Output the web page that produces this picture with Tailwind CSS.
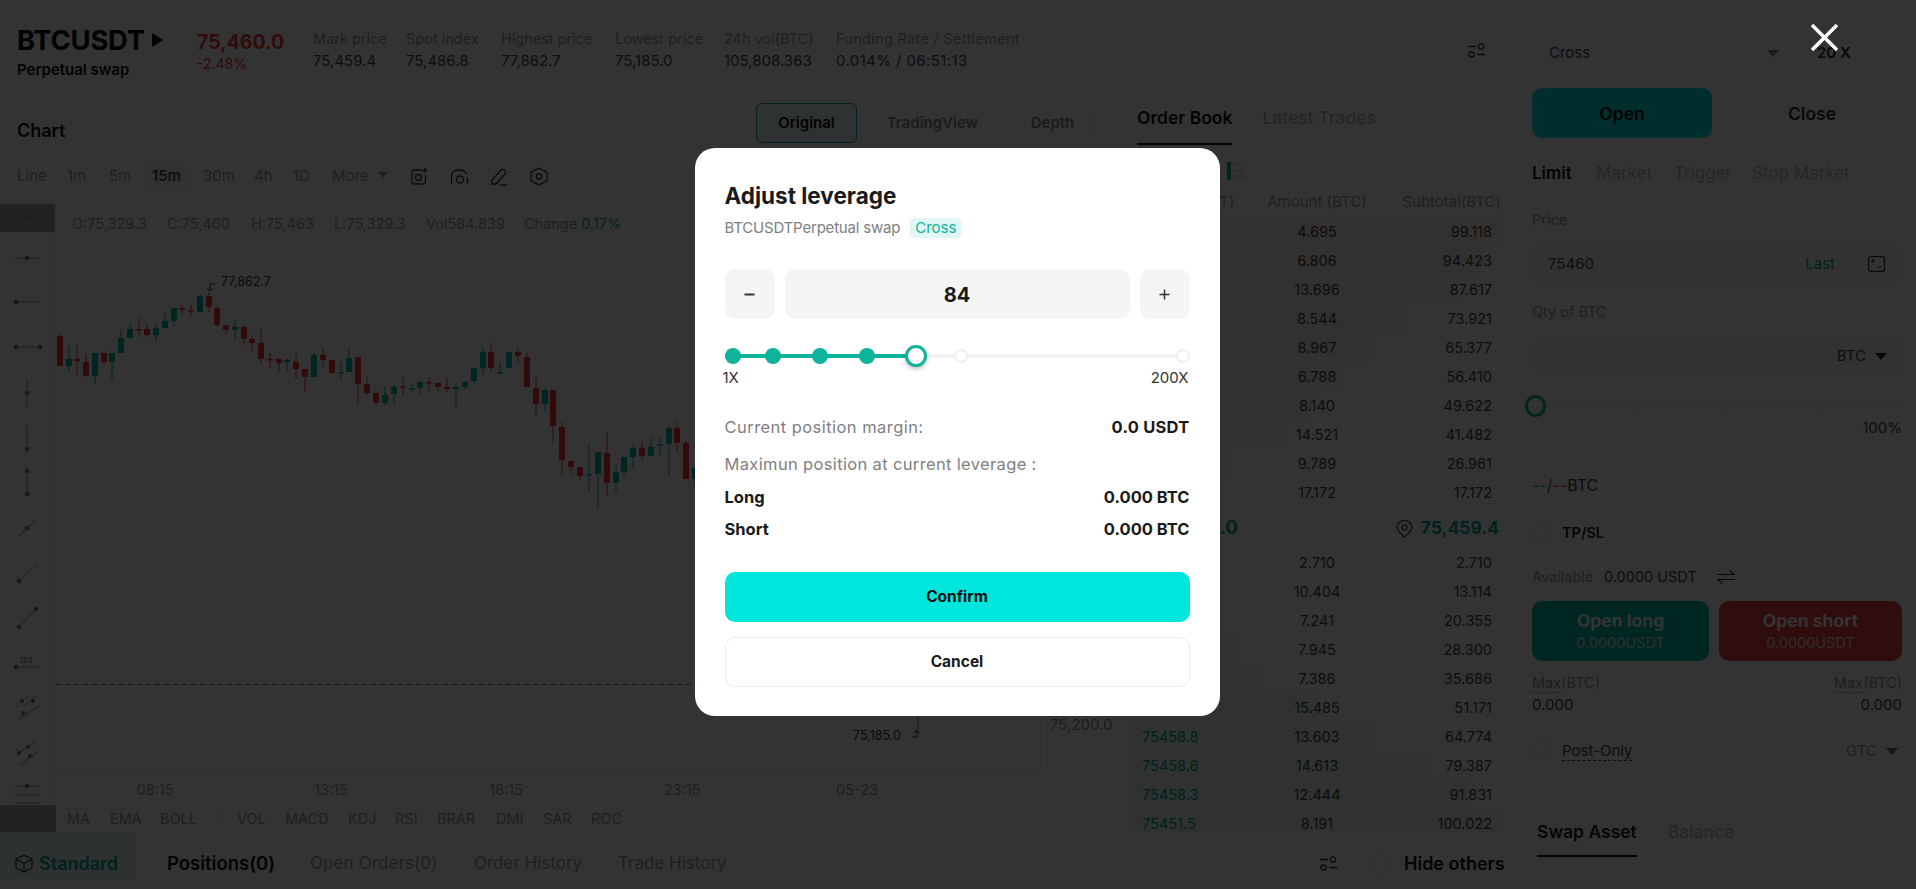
<!DOCTYPE html>
<html lang="en">
<head>
<meta charset="utf-8">
<title>BTCUSDT</title>
<script src="https://cdn.jsdelivr.net/npm/@tailwindcss/browser@4"></script>
</head>
<body class="m-0 bg-white">
<div class="relative w-[1916px] h-[889px] overflow-hidden bg-white font-['Inter','Noto_Sans',sans-serif] text-[14.5px] text-[#444]">
  <div class="flex h-[879px] overflow-hidden">
    <!-- LEFT REGION -->
    <div class="w-[1525px] flex flex-col">
      <!-- header -->
      <div class="h-[92px] shrink-0 flex border-b border-[#f0f0f0]">
        <div class="w-[197px] pl-[17px] pt-[25px]">
          <div class="flex items-center">
            <span class="text-[27.5px] leading-[30px] font-bold text-[#111] tracking-[-0.3px]">BTCUSDT</span>
            <svg class="ml-[7px]" width="11" height="14" viewBox="0 0 11 14"><path d="M0 0 L11 7 L0 14 Z" fill="#111"/></svg>
          </div>
          <div class="text-[15px] leading-[20px] mt-[5px] font-semibold text-[#111]">Perpetual swap</div>
        </div>
        <div class="w-[116px] pt-[29px]">
          <div class="text-[19.5px] leading-[26px] font-bold text-[#ef3a3a]">75,460.0</div>
          <div class="text-[14px] leading-[18px] text-[#ef3a3a]">-2.48%</div>
        </div>
        <div class="w-[93px] pt-[28px] leading-[22px]"><div class="text-[#999]">Mark price</div><div class="text-[15px]">75,459.4</div></div>
        <div class="w-[95px] pt-[28px] leading-[22px]"><div class="text-[#999]">Spot index</div><div class="text-[15px]">75,486.8</div></div>
        <div class="w-[114px] pt-[28px] leading-[22px]"><div class="text-[#999]">Highest price</div><div class="text-[15px]">77,862.7</div></div>
        <div class="w-[109px] pt-[28px] leading-[22px]"><div class="text-[#999]">Lowest price</div><div class="text-[15px]">75,185.0</div></div>
        <div class="w-[112px] pt-[28px] leading-[22px]"><div class="text-[#999]">24h vol(BTC)</div><div class="text-[15px]">105,808.363</div></div>
        <div class="w-[632px] pt-[28px] leading-[22px]"><div class="text-[#999] tracking-[0.3px]">Funding Rate / Settlement</div><div class="text-[15px] tracking-[0.4px]">0.014% / 06:51:13</div></div>
        <div class="pt-[43px]">
          <svg width="17" height="15" viewBox="0 0 17 15" fill="none" stroke="#333" stroke-width="1.3"><path d="M0 3.5H8M9 11.5H17"/><circle cx="13" cy="3.5" r="2.7"/><circle cx="3.5" cy="11.5" r="2.7"/></svg>
        </div>
      </div>
      <!-- middle -->
      <div class="h-[740px] shrink-0 flex overflow-hidden">
        <!-- chart column -->
        <div class="w-[1124px] flex flex-col">
          <div class="h-[61px] shrink-0 flex items-center border-b border-[#f5f5f5] pl-[17px] text-[15px]">
            <span class="text-[18px] font-semibold text-[#111] w-[739px] mt-[16px]">Chart</span>
            <span class="mt-[2px] w-[101px] h-[40px] rounded-[6px] border border-[#00a79d] bg-[#ecfbfa] flex items-center justify-center font-semibold text-[#111]">Original</span>
            <span class="mt-[2px] ml-[10px] w-[131px] h-[40px] rounded-[6px] border border-[#f2f2f2] flex items-center justify-center font-semibold text-[#888]">TradingView</span>
            <span class="mt-[2px] ml-[11px] w-[87px] h-[40px] rounded-[6px] border border-[#f2f2f2] flex items-center justify-center font-semibold text-[#888]">Depth</span>
          </div>
          <div class="h-[51px] shrink-0 flex items-center pl-[17px] pb-[4px] text-[#999] text-[15px]">
            <span class="w-[50px]">Line</span><span class="w-[42px]">1m</span><span class="w-[43px]">5m</span>
            <span class="w-[51px]"><span class="-ml-[5px] inline-block px-[5px] py-[1px] rounded-[3px] bg-[#f4f4f4] text-[#333] font-medium">15m</span></span>
            <span class="w-[51px]">30m</span><span class="w-[39px]">4h</span><span class="w-[39px]">1D</span>
            <span class="w-[79px] flex items-center">More<svg class="ml-[9px] -mt-[4px]" width="10" height="6" viewBox="0 0 10 6"><path d="M0 0H10L5 6Z" fill="#999"/></svg></span>
            <svg class="mr-[22px]" width="17" height="18" viewBox="0 0 17 18" fill="none" stroke="#333" stroke-width="1.3"><path d="M11 2H3.5Q1 2 1 4.5V13.5Q1 16 3.5 16H11Q14.5 16 14.5 13.5V7"/><circle cx="7.5" cy="9.5" r="3"/><path d="M14 0V5M11.5 2.5H16.5"/></svg>
            <svg class="mr-[21px]" width="19" height="18" viewBox="0 0 19 18" fill="none" stroke="#333" stroke-width="1.3"><path d="M1.5 16V9Q1.5 2 9 2Q14 2 17 6"/><circle cx="10" cy="11.5" r="3.5"/><path d="M17.5 10V16"/></svg>
            <svg class="mr-[22px]" width="18" height="18" viewBox="0 0 18 18" fill="none" stroke="#333" stroke-width="1.3"><path d="M2 12L11 2Q13 0.5 15 2.5Q16.500 4.500 15 6L6 16H1.500Z"/><path d="M9 17H17"/></svg>
            <svg width="18" height="19" viewBox="0 0 18 19" fill="none" stroke="#333" stroke-width="1.3"><path d="M9 1L17 5.500V13.500L9 18L1 13.500V5.500Z"/><circle cx="9" cy="9.500" r="2.700"/></svg>
          </div>
          <div class="h-[601px] shrink-0 flex">
            <div class="w-[56px] shrink-0 border-r border-[#eee] flex flex-col">
              <div class="h-[28px] shrink-0 bg-[#a8acb2] flex items-center justify-center">
                <svg width="14" height="9" viewBox="0 0 14 9" fill="none" stroke="#888c92" stroke-width="1.2"><path d="M0.500 8.500L7 1L13.500 8.500"/></svg>
              </div>
              <svg width="55" height="573" viewBox="0 232 55 573" fill="none" stroke="#777" stroke-width="1">
                <g fill="#777" stroke="#777" stroke-width="0.8">
                  <path d="M14 258H40"/><circle cx="27" cy="258" r="2"/>
                  <path d="M16 302H40"/><circle cx="16" cy="302" r="2"/>
                  <path d="M16 347H40"/><circle cx="16" cy="347" r="2"/><circle cx="40" cy="347" r="2"/>
                  <path d="M27 380V407"/><circle cx="27" cy="393" r="2"/>
                  <path d="M27 425V449"/><circle cx="27" cy="449" r="2"/>
                  <path d="M27 471V494"/><circle cx="27" cy="471" r="2"/><circle cx="27" cy="494" r="2"/>
                  <path d="M18 537L37 519"/><circle cx="27" cy="528" r="2"/>
                  <path d="M19 582L37 564"/><circle cx="19" cy="581" r="2"/>
                  <path d="M19 627L36 609"/><circle cx="19" cy="627" r="2"/><circle cx="36" cy="609" r="2"/>
                  <path d="M16 667H40"/><circle cx="16" cy="667" r="2"/>
                  <path d="M15 708L28 696M19 719L39 706M24 706L36 696"/><circle cx="22" cy="701" r="1.700"/><circle cx="33" cy="701" r="1.700"/><circle cx="23" cy="713" r="1.700"/>
                  <path d="M15 756L35 741M20 765L39 751"/><circle cx="28" cy="747" r="1.700"/><circle cx="19" cy="753" r="1.700"/><circle cx="30" cy="756" r="1.700"/>
                  <path d="M14 786H40M14 795H40M14 803H40"/><circle cx="27" cy="786" r="2"/>
                </g>
                <text x="26" y="663" text-anchor="middle" font-size="8" fill="#777" stroke="none">123</text>
              </svg>
            </div>
            <!-- plot -->
            <div class="relative flex-1 overflow-hidden">
              <svg class="absolute left-0 top-0" width="1068" height="601" viewBox="56 204 1068 601" fill="none">
                <path stroke="#f1f1f1" stroke-width="1" stroke-dasharray="2 2" d="M56 269H1040M56 334H1040M56 399H1040M56 464H1040M56 530H1040M56 596H1040M56 661H1040M56 726H1040M155.500 204V772M331.500 204V772M506.500 204V772M682.500 204V772M857.500 204V772"/>
                <path stroke="#e6e6e6" stroke-width="1" d="M56 772.500H1040.500V204"/>
                <path stroke="#00a79d" stroke-width="1" stroke-dasharray="5 4" d="M56 684.500H1040"/>
                <path stroke="#f2333b" stroke-width="1" d="M60 334V366M77 344V376M86 354V377M104 350V365M139 318V337M147 324V337M182 305V315M191 305V316M209 292V312M217 306V327M226 325V334M244 325V345M252 335V352M261 329V363M270 353V368M279 359V372M296 353V379M305 369V392M323 348V367M332 360V374M358 357V404M367 377V395M376 390V405M403 377V395M429 377V391M438 383V392M447 377V392M491 343V371M518 348V363M527 353V387M536 377V417M553 390V442M562 422V475M571 461V474M580 467V480M607 433V496M642 442V460M677 422V452M686 441V479M918 716V729"/>
                <path stroke="#f2333b" stroke-width="6" d="M60 336V366M77 359V361M86 362V376M104 353V362M139 329V330.500M147 329V335M182 308V310M191 310V311.500M209 296V307M217 308V325M226 325V330M244 327V339M252 339V343M261 343V359M270 359V360.500M279 359V363M296 362V369M305 369V377M323 355V360M332 360V373M358 357V384M367 384V393M376 393V403M403 386V387.500M429 382V383.500M438 383V387M447 387V389M491 352V368M518 352V356M527 357V387M536 388V404M553 390V426M562 427V460M571 461V467M580 467V476M607 453V483M642 448V456M677 428V443M686 443V479"/>
                <path stroke="#00b39f" stroke-width="1" d="M69 346V372M95 353V385M112 353V380M121 329V353M130 323V338M156 324V342M165 311V328M174 308V327M200 294V312M235 319V339M287 359V372M314 353V377M341 362V379M349 349V372M385 386V405M394 385V404M412 383V392M420 381V395M456 382V409M465 381V389M474 368V385M483 347V374M500 362V374M509 352V368M545 388V412M589 445V492M598 452V508M616 465V492M624 455V477M633 446V469M651 438V456M660 436V456M669 426V476M695 468V488"/>
                <path stroke="#00b39f" stroke-width="6" d="M69 359V366M95 353V376M112 353V362M121 338V353M130 329V338M156 328V335M165 321V328M174 308V321M200 296V312M235 327V330M287 360V362M314 355V377M341 372V373.500M349 358V372M385 395V403M394 387V394M412 388V389.500M420 382V388M456 387V389M465 382V387M474 368V381M483 352V368M500 372V373.500M509 352V368M545 390V404M589 474V475.500M598 452V474M616 472V483M624 457V472M633 448V457M651 447V456M660 444V445.500M669 428V444M695 468V479M925 710V716"/>
                <path stroke="#333" stroke-width="1" d="M215 284H210V290M207 288L210 291L213 288"/>
                <path stroke="#333" stroke-width="1" d="M912 737H917V731M914 733L917 730L920 733"/>
              </svg>
              <div class="absolute left-[16px] top-[11px] flex text-[#999] text-[14.5px] leading-[18px] whitespace-nowrap">
                <span class="w-[95px]">O:75,329.3</span><span class="w-[84px]">C:75,460</span><span class="w-[83px]">H:75,463</span><span class="w-[92px]">L:75,329.3</span><span class="w-[98px]">Vol584.839</span><span>Change <span class="text-[#00b39f]">0.17%</span></span>
              </div>
              <span class="absolute left-[165px] top-[70px] text-[12.5px] leading-[16px] text-[#333]">77,862.7</span>
              <span class="absolute left-[797px] top-[524px] text-[12.5px] leading-[16px] text-[#333]">75,185.0</span>
              <span class="absolute left-[994px] top-[512px] text-[#888] text-[15px] leading-[18px]">75,200.0</span>
              <span class="absolute left-[99px] top-[577px] w-[0] flex justify-center whitespace-nowrap text-[#999] leading-[18px]">08:15</span>
              <span class="absolute left-[275px] top-[577px] w-[0] flex justify-center whitespace-nowrap text-[#999] leading-[18px]">13:15</span>
              <span class="absolute left-[450px] top-[577px] w-[0] flex justify-center whitespace-nowrap text-[#999] leading-[18px]">18:15</span>
              <span class="absolute left-[626px] top-[577px] w-[0] flex justify-center whitespace-nowrap text-[#999] leading-[18px]">23:15</span>
              <span class="absolute left-[801px] top-[577px] w-[0] flex justify-center whitespace-nowrap text-[#999] leading-[18px]">05-23</span>
            </div>
          </div>
          <div class="h-[27px] shrink-0 flex items-center text-[#999]">
            <div class="w-[56px] h-full bg-[#a8acb2] flex items-center justify-center">
              <svg width="14" height="9" viewBox="0 0 14 9" fill="none" stroke="#888c92" stroke-width="1.2"><path d="M0.500 0.500L7 8L13.500 0.500"/></svg>
            </div>
            <div class="pl-[11px] flex items-center">
              <span class="w-[43px]">MA</span><span class="w-[50px]">EMA</span><span class="w-[57px]">BOLL</span><span class="w-[20px] h-[20px] border-l border-[#e5e5e5]"></span><span class="w-[48px]">VOL</span><span class="w-[63px]">MACD</span><span class="w-[47px]">KDJ</span><span class="w-[42px]">RSI</span><span class="w-[59px]">BRAR</span><span class="w-[47px]">DMI</span><span class="w-[48px]">SAR</span><span>ROC</span>
            </div>
          </div>
        </div>
        <!-- order book -->
        <div class="w-[401px] flex flex-col overflow-hidden">
          <div class="h-[55px] shrink-0 flex border-b border-[#f2f2f2] pl-[13px] pt-[15px]">
            <span class="h-[38px] border-b-2 border-[#111] text-[17.5px] leading-[22px] font-semibold text-[#111]">Order Book</span>
            <span class="ml-[30px] text-[17.5px] leading-[22px] text-[#bbb] font-medium">Latest Trades</span>
          </div>
          <div class="h-[38px] shrink-0 flex items-center justify-end pr-[280px] pt-[10px]">
            <svg width="18" height="20" viewBox="0 0 18 20"><path d="M0 1H4V19H0Z" fill="#00b39f"/><path d="M6 2H18V6H6ZM6 8H18V12H6ZM6 14H18V18H6Z" fill="#e8e8e8"/></svg>
          </div>
          <div class="h-[32px] shrink-0 grid grid-cols-[115px_120px_115px] pl-[18px] pt-[2px] items-center text-[#999] text-[15px]">
            <span>Price (USDT)</span><span class="text-center whitespace-nowrap">Amount (BTC)</span><span class="text-right -mr-[9px] whitespace-nowrap">Subtotal(BTC)</span>
          </div>
          <!-- asks -->
          <div class="relative h-[29px] shrink-0 grid grid-cols-[115px_120px_115px] pl-[18px] items-center"><div class="absolute left-[9px] top-0 bottom-0 bg-[#ffeded]" style="width:367px"></div><span class="relative text-[#ef3a3a]">75463.0</span><span class="relative text-center">4.695</span><span class="relative text-right">99.118</span></div>
          <div class="relative h-[29px] shrink-0 grid grid-cols-[115px_120px_115px] pl-[18px] items-center"><div class="absolute left-[9px] top-0 bottom-0 bg-[#ffeded]" style="width:348px"></div><span class="relative text-[#ef3a3a]">75462.7</span><span class="relative text-center">6.806</span><span class="relative text-right">94.423</span></div>
          <div class="relative h-[29px] shrink-0 grid grid-cols-[115px_120px_115px] pl-[18px] items-center"><div class="absolute left-[9px] top-0 bottom-0 bg-[#ffeded]" style="width:324px"></div><span class="relative text-[#ef3a3a]">75462.3</span><span class="relative text-center">13.696</span><span class="relative text-right">87.617</span></div>
          <div class="relative h-[29px] shrink-0 grid grid-cols-[115px_120px_115px] pl-[18px] items-center"><div class="absolute left-[9px] top-0 bottom-0 bg-[#ffeded]" style="width:270px"></div><span class="relative text-[#ef3a3a]">75461.9</span><span class="relative text-center">8.544</span><span class="relative text-right">73.921</span></div>
          <div class="relative h-[29px] shrink-0 grid grid-cols-[115px_120px_115px] pl-[18px] items-center"><div class="absolute left-[9px] top-0 bottom-0 bg-[#ffeded]" style="width:240px"></div><span class="relative text-[#ef3a3a]">75461.5</span><span class="relative text-center">8.967</span><span class="relative text-right">65.377</span></div>
          <div class="relative h-[29px] shrink-0 grid grid-cols-[115px_120px_115px] pl-[18px] items-center"><div class="absolute left-[9px] top-0 bottom-0 bg-[#ffeded]" style="width:207px"></div><span class="relative text-[#ef3a3a]">75461.2</span><span class="relative text-center">6.788</span><span class="relative text-right">56.410</span></div>
          <div class="relative h-[29px] shrink-0 grid grid-cols-[115px_120px_115px] pl-[18px] items-center"><div class="absolute left-[9px] top-0 bottom-0 bg-[#ffeded]" style="width:182px"></div><span class="relative text-[#ef3a3a]">75460.8</span><span class="relative text-center">8.140</span><span class="relative text-right">49.622</span></div>
          <div class="relative h-[29px] shrink-0 grid grid-cols-[115px_120px_115px] pl-[18px] items-center"><div class="absolute left-[9px] top-0 bottom-0 bg-[#ffeded]" style="width:152px"></div><span class="relative text-[#ef3a3a]">75460.5</span><span class="relative text-center">14.521</span><span class="relative text-right">41.482</span></div>
          <div class="relative h-[29px] shrink-0 grid grid-cols-[115px_120px_115px] pl-[18px] items-center"><div class="absolute left-[9px] top-0 bottom-0 bg-[#ffeded]" style="width:98px"></div><span class="relative text-[#ef3a3a]">75460.2</span><span class="relative text-center">9.789</span><span class="relative text-right">26.961</span></div>
          <div class="relative h-[29px] shrink-0 grid grid-cols-[115px_120px_115px] pl-[18px] items-center"><div class="absolute left-[9px] top-0 bottom-0 bg-[#ffeded]" style="width:63px"></div><span class="relative text-[#ef3a3a]">75460.0</span><span class="relative text-center">17.172</span><span class="relative text-right">17.172</span></div>
          <!-- mid -->
          <div class="h-[39px] shrink-0 flex items-center justify-between pl-[18px] pr-[26px] border-y border-[#f5f5f5] mt-[2px]">
            <span class="w-[96px] text-right text-[19px] font-bold text-[#00a593]">75,460.0</span>
            <span class="flex items-center gap-[8px] text-[17.5px] font-bold text-[#00a593]">
              <svg width="17" height="18" viewBox="0 0 17 18" fill="none" stroke="#333" stroke-width="1.200"><path d="M8.500 17Q1 10.500 1 7.500A7.500 7 0 0 1 16 7.500Q16 10.500 8.500 17Z"/><circle cx="8.500" cy="7.500" r="2.500"/></svg>75,459.4
            </span>
          </div>
          <!-- bids -->
          <div class="relative h-[29px] shrink-0 grid grid-cols-[115px_120px_115px] pl-[18px] items-center"><div class="absolute left-[9px] top-0 bottom-0 bg-[#e8f8f6]" style="width:10px"></div><span class="relative text-[#00a593]">75459.9</span><span class="relative text-center">2.710</span><span class="relative text-right">2.710</span></div>
          <div class="relative h-[29px] shrink-0 grid grid-cols-[115px_120px_115px] pl-[18px] items-center"><div class="absolute left-[9px] top-0 bottom-0 bg-[#e8f8f6]" style="width:48px"></div><span class="relative text-[#00a593]">75459.7</span><span class="relative text-center">10.404</span><span class="relative text-right">13.114</span></div>
          <div class="relative h-[29px] shrink-0 grid grid-cols-[115px_120px_115px] pl-[18px] items-center"><div class="absolute left-[9px] top-0 bottom-0 bg-[#e8f8f6]" style="width:75px"></div><span class="relative text-[#00a593]">75459.5</span><span class="relative text-center">7.241</span><span class="relative text-right">20.355</span></div>
          <div class="relative h-[29px] shrink-0 grid grid-cols-[115px_120px_115px] pl-[18px] items-center"><div class="absolute left-[9px] top-0 bottom-0 bg-[#e8f8f6]" style="width:103px"></div><span class="relative text-[#00a593]">75459.3</span><span class="relative text-center">7.945</span><span class="relative text-right">28.300</span></div>
          <div class="relative h-[29px] shrink-0 grid grid-cols-[115px_120px_115px] pl-[18px] items-center"><div class="absolute left-[9px] top-0 bottom-0 bg-[#e8f8f6]" style="width:131px"></div><span class="relative text-[#00a593]">75459.1</span><span class="relative text-center">7.386</span><span class="relative text-right">35.686</span></div>
          <div class="relative h-[29px] shrink-0 grid grid-cols-[115px_120px_115px] pl-[18px] items-center"><div class="absolute left-[9px] top-0 bottom-0 bg-[#e8f8f6]" style="width:188px"></div><span class="relative text-[#00a593]">75459.0</span><span class="relative text-center">15.485</span><span class="relative text-right">51.171</span></div>
          <div class="relative h-[29px] shrink-0 grid grid-cols-[115px_120px_115px] pl-[18px] items-center"><div class="absolute left-[9px] top-0 bottom-0 bg-[#e8f8f6]" style="width:239px"></div><span class="relative text-[#00a593]">75458.8</span><span class="relative text-center">13.603</span><span class="relative text-right">64.774</span></div>
          <div class="relative h-[29px] shrink-0 grid grid-cols-[115px_120px_115px] pl-[18px] items-center"><div class="absolute left-[9px] top-0 bottom-0 bg-[#e8f8f6]" style="width:292px"></div><span class="relative text-[#00a593]">75458.6</span><span class="relative text-center">14.613</span><span class="relative text-right">79.387</span></div>
          <div class="relative h-[29px] shrink-0 grid grid-cols-[115px_120px_115px] pl-[18px] items-center"><div class="absolute left-[9px] top-0 bottom-0 bg-[#e8f8f6]" style="width:337px"></div><span class="relative text-[#00a593]">75458.3</span><span class="relative text-center">12.444</span><span class="relative text-right">91.831</span></div>
          <div class="relative h-[29px] shrink-0 grid grid-cols-[115px_120px_115px] pl-[18px] items-center"><div class="absolute left-[9px] top-0 bottom-0 bg-[#e8f8f6]" style="width:367px"></div><span class="relative text-[#00a593]">75451.5</span><span class="relative text-center">8.191</span><span class="relative text-right">100.022</span></div>
        </div>
      </div>
      <!-- bottom tabs -->
      <div class="h-[47px] shrink-0 flex items-start">
        <div class="w-[135px] h-full bg-[#dff7f5] flex items-center pl-[15px] pt-[16px] gap-[6px] text-[18px] font-semibold text-[#00a593]">
          <svg width="18" height="19" viewBox="0 0 18 19" fill="none" stroke="#333" stroke-width="1.200"><path d="M9 1L17 5V14L9 18L1 14V5ZM1 5L9 9.500L17 5M9 9.500V18"/></svg>Standard
        </div>
        <div class="flex-1 h-full flex items-center pt-[16px]">
          <span class="ml-[32px] w-[143px] text-[18.5px] font-semibold text-[#111]">Positions(0)</span>
          <span class="w-[164px] text-[17px] tracking-[0.1px] text-[#999]">Open Orders(0)</span>
          <span class="w-[144px] text-[17px] text-[#999]">Order History</span>
          <span class="w-[702px] text-[17px] text-[#999]">Trade History</span>
          <svg class="mr-[37px]" width="17" height="15" viewBox="0 0 17 15" fill="none" stroke="#333" stroke-width="1.300"><path d="M0 3.500H8M9 11.500H17"/><circle cx="13" cy="3.500" r="2.700"/><circle cx="3.500" cy="11.500" r="2.700"/></svg>
          <span class="w-[18px] h-[18px] shrink-0 rounded-[3px] border border-[#e8e8e8] mr-[12px]"></span>
          <span class="text-[18px] font-semibold text-[#111] whitespace-nowrap">Hide others</span>
        </div>
      </div>
    </div>
    <!-- ORDER FORM -->
    <div class="w-[391px] pl-[7px] pr-[14px] pt-[30px] flex flex-col">
      <div class="h-[45px] shrink-0 flex gap-[14px] text-[15px]">
        <div class="w-[258px] pt-[2px] rounded-[8px] border border-[#f5f5f5] flex items-center justify-between pl-[16px] pr-[10px]"><span>Cross</span><svg width="12" height="7" viewBox="0 0 12 7"><path d="M0 0H12L6 7Z" fill="#888"/></svg></div>
        <div class="flex-1 pt-[2px] rounded-[8px] border border-[#f5f5f5] flex items-center pl-[12px] font-semibold text-[#222]">20 X</div>
      </div>
      <div class="h-[50px] shrink-0 mt-[13px] flex gap-[10px]">
        <div class="w-[180px] pt-[2px] rounded-[10px] bg-[#00e4dc] flex items-center justify-center text-[17.5px] font-semibold text-[#111]">Open</div>
        <div class="flex-1 pt-[2px] rounded-[10px] border border-[#f7f7f7] flex items-center justify-center text-[17.5px] font-semibold text-[#333]">Close</div>
      </div>
      <div class="h-[22px] shrink-0 mt-[25px] flex items-center text-[17px] text-[#bbb] whitespace-nowrap">
        <span class="w-[64px] font-semibold text-[#111]">Limit</span><span class="w-[78px]">Market</span><span class="w-[78px]">Trigger</span><span>Stop Market</span>
      </div>
      <div class="h-[20px] shrink-0 mt-[25px] flex items-center text-[#999]">Price</div>
      <div class="h-[46px] shrink-0 mt-[11px] rounded-[8px] bg-[#fafafa] flex items-center pl-[16px] pr-[17px] text-[15px]">
        <span class="flex-1">75460</span><span class="text-[#00a593]">Last</span><span class="w-[1px] h-[16px] bg-[#eee] mx-[16px]"></span>
        <svg width="17" height="16" viewBox="0 0 17 16" fill="none" stroke="#333" stroke-width="1.200"><rect x="0.600" y="0.600" width="15.800" height="14.800" rx="2"/><path d="M3 5H7M5 3V7M10 11H14"/></svg>
      </div>
      <div class="h-[20px] shrink-0 mt-[15px] flex items-center text-[#999]">Qty of BTC</div>
      <div class="h-[46px] shrink-0 mt-[11px] rounded-[8px] bg-[#fafafa] flex items-center justify-end pr-[15px] gap-[9px] text-[15px]"><span>BTC</span><svg width="12" height="7" viewBox="0 0 12 7"><path d="M0 0H12L6 7Z" fill="#222"/></svg></div>
      <div class="relative h-[24px] shrink-0 mt-[15px] flex items-center">
        <div class="absolute left-0 right-0 top-[10px] h-[4px] bg-[#f7f7f7]"></div>
        <span class="relative w-[22px] h-[22px] rounded-full border-[3px] border-[#00b39f] bg-white -ml-[7px]"></span>
        <span class="relative ml-[82px] w-[12px] h-[12px] rounded-full border border-[#e8e8e8] bg-white"></span>
        <span class="relative ml-[81px] w-[12px] h-[12px] rounded-full border border-[#e8e8e8] bg-white"></span>
        <span class="relative ml-[81px] w-[12px] h-[12px] rounded-full border border-[#e8e8e8] bg-white"></span>
        <span class="relative ml-[67px] w-[12px] h-[12px] rounded-full border border-[#e8e8e8] bg-white"></span>
      </div>
      <div class="h-[20px] shrink-0 flex items-center justify-end text-[15px]">100%</div>
      <div class="h-[24px] shrink-0 mt-[35px] flex items-center text-[16px]"><span class="text-[#00a593]">--</span><span>/</span><span class="text-[#ef3a3a]">--</span><span>BTC</span></div>
      <div class="h-[20px] shrink-0 mt-[26px] flex items-center"><span class="ml-[2px] w-[18px] h-[18px] rounded-[3px] border border-[#e8e8e8] mr-[10px]"></span><span class="font-semibold text-[#222]">TP/SL</span></div>
      <div class="h-[20px] shrink-0 mt-[24px] flex items-center"><span class="text-[#999] w-[72px]">Available</span><span class="w-[113px]">0.0000 USDT</span>
        <svg width="18" height="14" viewBox="0 0 18 14" fill="none" stroke="#333" stroke-width="1.200"><path d="M0 4.500H17L12.500 0.500M18 9.500H1L5.500 13.500"/></svg>
      </div>
      <div class="h-[60px] shrink-0 mt-[14px] flex gap-[10px] text-white">
        <div class="w-[177px] rounded-[10px] bg-[#00bfa5] flex flex-col items-center justify-center"><span class="text-[17.5px] leading-[24px] font-bold">Open long</span><span class="leading-[20px] text-white/80">0.0000USDT</span></div>
        <div class="flex-1 rounded-[10px] bg-[#ee4040] flex flex-col items-center justify-center"><span class="text-[17.5px] leading-[24px] font-bold">Open short</span><span class="leading-[20px] text-white/80">0.0000USDT</span></div>
      </div>
      <div class="h-[44px] shrink-0 mt-[11px] flex justify-between leading-[22px]">
        <div><div class="text-[#999]"><span class="border-b border-dashed border-[#999] leading-[18px] inline-block">Max</span>(BTC)</div><div class="text-[15px]">0.000</div></div>
        <div class="text-right"><div class="text-[#999]"><span class="border-b border-dashed border-[#999] leading-[18px] inline-block">Max</span>(BTC)</div><div class="text-[15px]">0.000</div></div>
      </div>
      <div class="h-[20px] shrink-0 mt-[25px] flex items-center text-[15px]"><span class="ml-[2px] w-[18px] h-[18px] rounded-[3px] border border-[#e8e8e8] mr-[10px]"></span><span class="border-b border-dashed border-[#444] leading-[18px]">Post-Only</span><span class="ml-auto text-[#999] mr-[9px]">GTC</span><svg class="mr-[4px]" width="12" height="7" viewBox="0 0 12 7"><path d="M0 0H12L6 7Z" fill="#666"/></svg></div>
      <div class="-ml-[7px] -mr-[14px] mt-[45px] h-[50px] shrink-0 border-y border-[#f5f5f5] pl-[12px] pt-[14px] flex">
        <span class="h-[36px] border-b-2 border-[#111] text-[17.5px] leading-[22px] font-semibold text-[#222]">Swap Asset</span>
        <span class="ml-[31px] text-[17.5px] leading-[22px] text-[#bbb] font-medium">Balance</span>
      </div>
      <div class="mt-[22px] pl-[5px] flex justify-between text-[#888] shrink-0"><span>Account equity</span><span class="font-semibold text-[#222] tracking-[1px] pr-[4px]">0.00000000 USDT</span></div>
    </div>
  </div>

  <!-- OVERLAY + MODAL -->
  <div class="absolute inset-0 bg-black/80 flex items-start justify-center pt-[148px] pr-[2px]">
    <svg class="absolute left-[1811px] top-[24px]" width="27" height="27" viewBox="0 0 27 27" fill="none" stroke="#fff" stroke-width="3.500"><path d="M1 1L26 26M26 1L1 26"/></svg>
    <div class="w-[525px] h-[568px] rounded-[20px] bg-white px-[30px] pt-[31px] flex flex-col">
      <div class="text-[22.5px] leading-[34px] font-bold text-[#1a1a1a]">Adjust leverage</div>
      <div class="mt-[5px] h-[20px] flex items-center"><span class="text-[#808080] text-[15px] tracking-[-0.2px]">BTCUSDTPerpetual swap</span><span class="ml-[10px] h-[20px] px-[5px] rounded-[4px] bg-[#e2f7f3] text-[#0fb39a] text-[15px] leading-[20px]">Cross</span></div>
      <div class="mt-[31px] h-[50px] flex gap-[10px]">
        <div class="w-[50px] rounded-[10px] bg-[#f5f5f5] flex items-center justify-center"><svg width="11" height="11" viewBox="0 0 11 11" stroke="#333" stroke-width="2"><path d="M0.500 5.500H10.500"/></svg></div>
        <div class="flex-1 pt-[2px] rounded-[10px] bg-[#f5f5f5] flex items-center justify-center text-[20px] font-bold text-[#1a1a1a]">84</div>
        <div class="w-[50px] rounded-[10px] bg-[#f5f5f5] flex items-center justify-center"><svg width="11" height="11" viewBox="0 0 11 11" stroke="#333" stroke-width="1.500"><path d="M0.500 5.500H10.500M5.500 0.500V10.500"/></svg></div>
      </div>
      <div class="relative mt-[25px] h-[24px]">
        <div class="absolute left-0 right-[2px] top-[10px] h-[4px] bg-[#f2f2f2]"></div>
        <div class="absolute left-0 top-[10px] h-[4px] w-[190px] bg-[#0db39a]"></div>
        <span class="absolute left-0 top-[4px] w-[16px] h-[16px] rounded-full bg-[#0db39a]"></span>
        <span class="absolute left-[40px] top-[4px] w-[16px] h-[16px] rounded-full bg-[#0db39a]"></span>
        <span class="absolute left-[87px] top-[4px] w-[16px] h-[16px] rounded-full bg-[#0db39a]"></span>
        <span class="absolute left-[134px] top-[4px] w-[16px] h-[16px] rounded-full bg-[#0db39a]"></span>
        <span class="absolute left-[180px] top-[1px] w-[22px] h-[22px] rounded-full border-[3px] border-[#0db39a] bg-white shadow-[0_2px_4px_rgba(0,0,0,0.25)]"></span>
        <span class="absolute left-[229px] top-[5px] w-[14px] h-[14px] rounded-full border-[2px] border-[#f0f0f0] bg-white"></span>
        <span class="absolute left-[451px] top-[5px] w-[14px] h-[14px] rounded-full border-[2px] border-[#f0f0f0] bg-white"></span>
      </div>
      <div class="flex justify-between text-[15px] leading-[20px] text-[#333] -ml-[2px] pr-[1px]"><span>1X</span><span>200X</span></div>
      <div class="mt-[29px] flex justify-between items-center text-[16.5px] leading-[20px]"><span class="text-[#808080] tracking-[0.45px]">Current position margin:</span><span class="font-bold text-[#1a1a1a] tracking-[0.25px]">0.0 USDT</span></div>
      <div class="mt-[17px] text-[16.5px] leading-[20px] tracking-[0.35px] text-[#808080]">Maximun position at current leverage :</div>
      <div class="mt-[13px] flex justify-between text-[16.5px] leading-[20px] font-bold text-[#1a1a1a]"><span>Long</span><span>0.000 BTC</span></div>
      <div class="mt-[12px] flex justify-between text-[16.5px] leading-[20px] font-bold text-[#1a1a1a]"><span>Short</span><span>0.000 BTC</span></div>
      <div class="mt-[33px] h-[50px] rounded-[10px] bg-[#00e5dc] flex items-center justify-center text-[15.5px] font-bold text-[#111]">Confirm</div>
      <div class="mt-[15px] h-[50px] rounded-[10px] border border-[#ececec] flex items-center justify-center text-[15.5px] font-bold text-[#1a1a1a]">Cancel</div>
    </div>
  </div>
</div>
</body>
</html>
